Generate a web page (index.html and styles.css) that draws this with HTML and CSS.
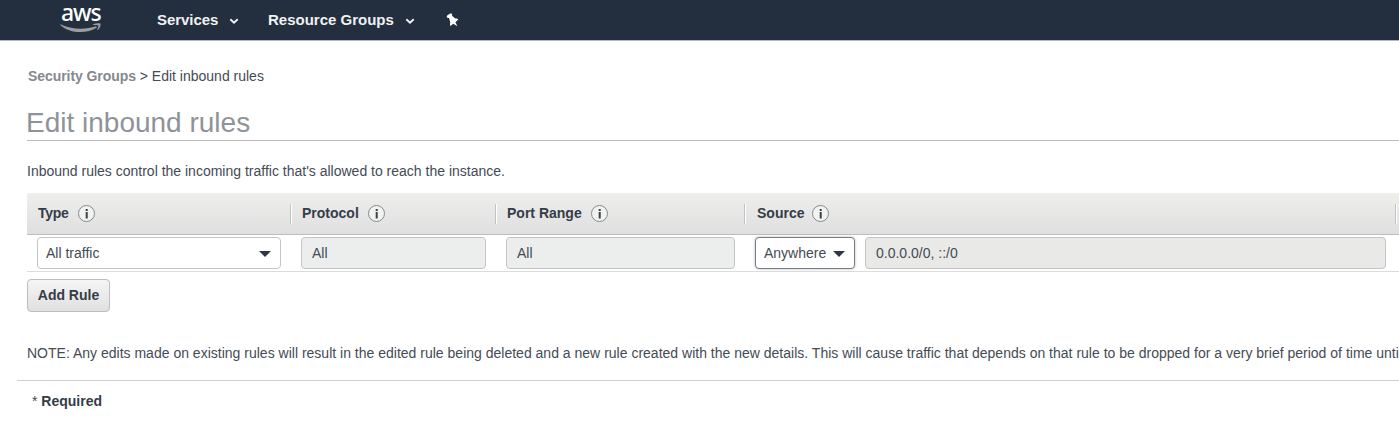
FILE: index.html
```html
<!DOCTYPE html>
<html lang="en">
<head>
<meta charset="utf-8">
<title>Edit inbound rules</title>
<link rel="stylesheet" href="styles.css">
</head>
<body>
<header class="navbar">
  <div class="logo">
    <span class="logo-text">aws</span>
    <svg class="smile" width="42" height="10" viewBox="0 0 42 10"><path d="M.500 1.200C11 6.500 25 7 36 3.200l1 1.300C27 11 10 11 .300 2Z" fill="#9a9da3"/><path d="M33 1.200C35.500 .200 38.500 0 40.500.600c.400 2.200-.500 4.500-2.700 6.600l-.600-.400C38 4.800 38.700 3.400 38.200 2.400 37 1.900 35 2 33.200 2Z" fill="#9a9da3"/></svg>
  </div>
  <a class="nav-link services">Services</a>
  <svg class="chevron" width="10" height="7" viewBox="0 0 10 7"><path d="M1.300 1.300 5 4.700 8.700 1.300" fill="none" stroke="#f0f1f2" stroke-width="1.900"/></svg>
  <a class="nav-link groups">Resource Groups</a>
  <svg class="chevron" width="10" height="7" viewBox="0 0 10 7"><path d="M1.300 1.300 5 4.700 8.700 1.300" fill="none" stroke="#f0f1f2" stroke-width="1.900"/></svg>
  <svg class="pin" width="13" height="14" viewBox="0 0 13 14"><path d="M.600 3.500C1.500 2 3.500.600 5.200.300L6.200 1.600 6 2.700 9.300 5.500C10.500 5.300 11.700 5.700 12.300 6.500L9.400 9.200 11.400 13.300 7.300 10.700 4.500 13C3.800 12 3.900 10.800 4.300 9.800L3.100 4.900 1.500 5Z" fill="#fff"/></svg>
</header>
<main class="content">
  <nav class="breadcrumb"><b>Security Groups</b> <span>&gt; Edit inbound rules</span></nav>
  <h1 class="title"><span>Edit inbound rules</span></h1>
  <p class="intro">Inbound rules control the incoming traffic that's allowed to reach the instance.</p>
  <section class="rules">
    <div class="row head">
      <div class="th"><span class="type-label">Type</span><svg class="info" viewBox="0 0 18 18"><use href="#info"/></svg></div>
      <div class="th sep"><span>Protocol</span><svg class="info" viewBox="0 0 18 18"><use href="#info"/></svg></div>
      <div class="th sep"><span>Port Range</span><svg class="info" viewBox="0 0 18 18"><use href="#info"/></svg></div>
      <div class="th sep source-head"><span>Source</span><svg class="info" viewBox="0 0 18 18"><use href="#info"/></svg></div>
      <div class="th sep"></div>
    </div>
    <div class="row body">
      <div class="field select">All traffic<i class="caret"></i></div>
      <div class="field disabled">All</div>
      <div class="field disabled">All</div>
      <div class="source">
        <div class="field select focused">Anywhere<i class="caret"></i></div>
        <div class="field disabled address">0.0.0.0/0, ::/0</div>
      </div>
    </div>
  </section>
  <button class="add" type="button">Add Rule</button>
  <p class="note">NOTE: Any edits made on existing rules will result in the edited rule being deleted and a new rule created with the new details. This will cause traffic that depends on that rule to be dropped for a very brief period of time unti</p>
</main>
<footer class="required">* <b>Required</b></footer>
<svg width="0" height="0" class="defs"><defs><g id="info"><circle cx="8.500" cy="8.500" r="8" fill="#f2f2f1" stroke="#85898f"/><path d="M7.700 4h2v2h-2zM7.700 7h2v6.500h-2z" fill="#3a414c"/></g></defs></svg>
</body>
</html>
```
FILE: styles.css
```css
* { box-sizing: border-box; }
body { margin: 0; height: 445px; overflow: hidden; background: #fff; color: #444b55; font: 14px/16px "Liberation Sans", Arial, sans-serif; }
.navbar { display: flex; height: 41px; background: #232f3e; border-bottom: 1px solid #b5b8bb; padding-left: 60px; color: #f0f1f2; }
.logo { display: flex; flex-direction: column; width: 42px; height: 40px; padding-top: 1px; }
.logo-text { font: 500 23px/22px "Noto Sans", sans-serif; color: #fff; padding-left: 1px; letter-spacing: -1.1px; }
.smile { display: block; }
.nav-link { font-size: 15px; line-height: 40px; font-weight: bold; white-space: nowrap; letter-spacing: -.05px; }
.services { width: 61px; margin-left: 55px; }
.groups { width: 126px; margin-left: 29px; letter-spacing: 0; }
.chevron { margin: 18px 0 0 11px; flex: none; }
.pin { margin: 13px 0 0 31px; flex: none; }
.content { padding-left: 27px; }
.breadcrumb { padding: 27px 0 0 1px; height: 43px; white-space: nowrap; }
.breadcrumb b { color: #85898f; letter-spacing: -.07px; }
.title { margin: 0; padding-top: 23px; height: 57px; border-bottom: 1px solid #bcbcbc; font-size: 28px; line-height: 32px; font-weight: normal; color: #8f9399; }
.title span { margin-left: -1px; }
.intro { margin: 22px 0 14px; }
.row { display: grid; grid-template-columns: 263px 205px 249px 651px 4px; }
.head { height: 42px; background: linear-gradient(#eeeeed, #dfdfdf); border-bottom: 1px solid #bebebe; font-weight: bold; color: #353c48; }
.th { display: flex; align-items: flex-start; padding: 12px 0 0 11px; position: relative; gap: 9px; }
.th.sep { padding-left: 12px; }
.th.source-head { padding-left: 13px; gap: 8px; }
.th.sep::before { content: ""; position: absolute; left: 0; top: 11px; width: 2px; height: 20px; background: linear-gradient(90deg, #c2c2c2 50%, #fff 50%); }
.th span { white-space: nowrap; }
.type-label { letter-spacing: -.25px; }
.info { width: 18px; height: 18px; flex: none; }
.body { height: 37px; border-bottom: 1px solid #dcdcdc; padding-top: 2px; }
.field { height: 32px; border: 1px solid #c4c4c4; border-radius: 4px; padding-left: 10px; line-height: 31px; margin-left: 11px; margin-right: 9px; white-space: nowrap; }
.select { display: flex; justify-content: space-between; padding: 0 9px 0 8px; margin-left: 10px; background: #fff; }
.disabled { background: #eceeed; }
.caret { width: 0; height: 0; margin-top: 13px; border: 6px solid transparent; border-top-color: #303744; border-bottom: 0; }
.source { display: flex; padding-left: 11px; gap: 10px; }
.source .field { margin: 0; }
.focused { width: 100px; border-color: #777b83; box-shadow: 0 0 3px #bbb; }
.address { width: 521px; background: #e9e9e8; }
.add { display: block; margin-top: 7px; width: 83px; height: 33px; padding: 0 0 2px; border: 1px solid #bdbdbd; border-radius: 4px; background: linear-gradient(#f5f5f5, #e0e0e0); font: bold 14px/16px "Liberation Sans", Arial, sans-serif; color: #353c48; }
.note { margin: 33px 0 0; white-space: nowrap; letter-spacing: .005px; }
.required { margin: 19px 0 0 17px; padding: 12px 0 0 15px; border-top: 1px solid #d0d0d0; }
.required b { color: #353c48; }
.defs { position: absolute; }
```
